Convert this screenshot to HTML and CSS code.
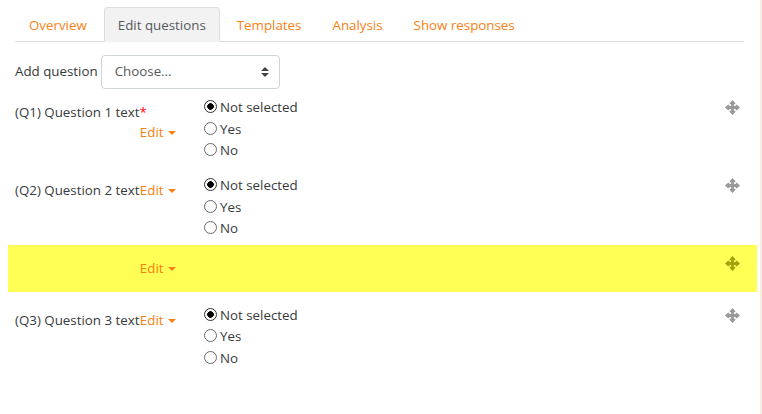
FILE: index.html
```html
<!DOCTYPE html>
<html lang="en">
<head>
  <meta charset="UTF-8">
  <meta name="viewport" content="width=device-width, initial-scale=1.0">
  <title>Edit questions</title>
  <link rel="stylesheet" href="styles.css">
</head>
<body>
  <svg class="defs" width="0" height="0">
    <symbol id="move" viewBox="0 0 16 16">
      <path d="M8 0 11 3.200V4.500H9.500V6.500H11.500V5H12.800L16 8 12.800 11H11.500V9.500H9.500V11.500H11V12.800L8 16 5 12.800V11.500H6.500V9.500H4.500V11H3.200L0 8 3.200 5H4.500V6.500H6.500V4.500H5V3.200Z"/>
    </symbol>
  </svg>

  <div class="page">
    <ul class="tabs">
      <li><a href="#">Overview</a></li>
      <li class="active"><a href="#">Edit questions</a></li>
      <li><a href="#">Templates</a></li>
      <li><a href="#">Analysis</a></li>
      <li><a href="#">Show responses</a></li>
    </ul>

    <div class="add-question">
      <label for="typ">Add question</label>
      <div class="select-wrap">
        <select id="typ"><option>Choose...</option></select>
        <svg class="select-arrows" width="8" height="10" viewBox="0 0 8 10"><path d="M4 0 8 4H0ZM0 6H8L4 10Z"/></svg>
      </div>
    </div>

    <!-- Q1 -->
    <div class="row">
      <div class="question">
        <span>(Q1) Question 1 text<span class="req">*</span></span>
        <a href="#" class="edit">Edit <i class="caret"></i></a>
      </div>
      <div class="options">
        <label><input type="radio" name="q1" checked>Not selected</label>
        <label><input type="radio" name="q1">Yes</label>
        <label><input type="radio" name="q1">No</label>
      </div>
      <svg class="move"><use href="#move"/></svg>
    </div>

    <!-- Q2 -->
    <div class="row">
      <div class="question">
        <span>(Q2) Question 2 text</span>
        <a href="#" class="edit">Edit <i class="caret"></i></a>
      </div>
      <div class="options">
        <label><input type="radio" name="q2" checked>Not selected</label>
        <label><input type="radio" name="q2">Yes</label>
        <label><input type="radio" name="q2">No</label>
      </div>
      <svg class="move"><use href="#move"/></svg>
    </div>

    <!-- page break -->
    <div class="row highlight">
      <div class="question">
        <a href="#" class="edit">Edit <i class="caret"></i></a>
      </div>
      <svg class="move"><use href="#move"/></svg>
    </div>

    <!-- Q3 -->
    <div class="row">
      <div class="question">
        <span>(Q3) Question 3 text</span>
        <a href="#" class="edit">Edit <i class="caret"></i></a>
      </div>
      <div class="options">
        <label><input type="radio" name="q3" checked>Not selected</label>
        <label><input type="radio" name="q3">Yes</label>
        <label><input type="radio" name="q3">No</label>
      </div>
      <svg class="move"><use href="#move"/></svg>
    </div>
  </div>
</body>
</html>
```

FILE: styles.css
```css
* { box-sizing: border-box; }
html, body {
  margin: 0;
  height: 100%;
  overflow: hidden;
  background: #fff;
}
body {
  color: #373a3c;
  font-family: "Open Sans", sans-serif;
  font-size: 13.330px;
  line-height: 21.500px;
}
a {
  color: #f98012;
  text-decoration: none;
}
.defs {
  position: absolute;
}
.page {
  height: 100%;
  padding: 7px 16px 0 15px;
  border-right: 2px solid #f7ede2;
}

/* tabs */
.tabs {
  display: flex;
  gap: 3px;
  margin: 0;
  padding: 0;
  list-style: none;
  border-bottom: 1px solid #ddd;
}
.tabs li {
  margin-bottom: -1px;
}
.tabs a {
  display: block;
  height: 35px;
  padding: 7px 13px 0;
  border: 1px solid transparent;
  border-radius: 4px 4px 0 0;
}
.tabs .active a {
  color: #55595c;
  background: #f2f2f2;
  border-color: #ddd;
  border-bottom-color: #f2f2f2;
}

/* add question */
.add-question {
  display: flex;
  align-items: center;
  gap: 3px;
  margin: 13px 0 8px;
}
.select-wrap {
  position: relative;
}
.select-wrap select {
  display: block;
  width: 179px;
  height: 34px;
  padding: 0 13px;
  appearance: none;
  background: #fff;
  border: 1px solid #ced4da;
  border-radius: 4px;
  color: #55595c;
  font: inherit;
}
.select-arrows {
  position: absolute;
  top: 12px;
  right: 11px;
  fill: #444;
}

/* question rows */
.row {
  display: flex;
  align-items: flex-start;
  padding-bottom: 13.500px;
}
.question {
  display: flex;
  flex-wrap: wrap;
  flex: none;
  width: 161px;
  padding-top: 5px;
  line-height: 20px;
}
.req {
  color: #f00;
}
.edit {
  margin-left: auto;
}
.caret {
  display: inline-block;
  margin-left: 1px;
  vertical-align: middle;
  border: 4px solid transparent;
  border-top-color: currentColor;
  border-bottom: 0;
}
.options {
  margin-left: 28px;
}
.options label {
  display: flex;
  align-items: center;
}
.options input {
  appearance: none;
  flex: none;
  width: 13px;
  height: 13px;
  margin: 0 3px 2px 0;
  background: #fff;
  border: 1px solid #6a6a6a;
  border-radius: 50%;
}
.options input:checked {
  background: radial-gradient(circle, #000 3px, #fff 3.600px);
  border-color: #333;
}
.move {
  flex: none;
  width: 15px;
  height: 15px;
  margin: 3px 4px 0 auto;
  fill: #999;
}
.highlight {
  height: 47px;
  margin: -8px -13px 12.500px -7px;
  padding: 8px 13px 0 7px;
  background: #ffff55;
}
.highlight .move {
  fill: #a3a30f;
}
```
